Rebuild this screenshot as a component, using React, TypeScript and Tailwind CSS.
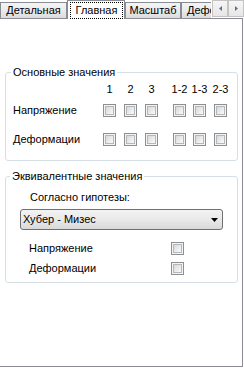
import React from "react";

function Check() {
  return (
    <div className="w-[13px] h-[13px] shrink-0 border border-[#8e8f8f] bg-[#f4f4f4] p-[1px]">
      <div className="w-full h-full border border-[#b4b8bd] bg-gradient-to-br from-[#d6d9dd] to-[#fafafa]" />
    </div>
  );
}

function Tab({ label, w }: { label: string; w: string }) {
  return (
    <div
      className={`${w} h-[16px] mb-[1px] shrink-0 border-t border-l border-r border-[#898c95] bg-gradient-to-b from-[#f4f4f4] via-[#ebebeb] to-[#dcdcdc] flex items-center justify-center whitespace-nowrap overflow-hidden`}
    >
      {label}
    </div>
  );
}

function Spin({ dir }: { dir: "l" | "r" }) {
  return (
    <div className="w-[16px] h-[17px] border border-[#c4c4c4] bg-gradient-to-b from-[#f6f6f6] to-[#e6e6e6] flex items-center justify-center">
      <svg width="3" height="5" viewBox="0 0 3 5">
        {dir === "l" ? (
          <polygon points="3,0 3,5 0,2.5" fill="#5a6f94" />
        ) : (
          <polygon points="0,0 0,5 3,2.5" fill="#5a6f94" />
        )}
      </svg>
    </div>
  );
}

const cols = ["1", "2", "3", "1-2", "1-3", "2-3"];
const colMargins = ["ml-0", "ml-[8px]", "ml-[8px]", "ml-[15px]", "ml-[7px]", "ml-[8px]"];

export default function App() {
  return (
    <div className="w-[244px] h-[368px] bg-white overflow-hidden relative text-[11px] leading-[13px] text-black font-['Liberation_Sans',Arial,sans-serif]">
      {/* tab strip */}
      <div className="relative z-10 h-[19px]">
        <div className="w-[211px] h-[19px] overflow-hidden flex items-end">
          <Tab label="Детальная" w="w-[67px]" />
          <div className="w-[58px] h-[19px] shrink-0 border-t border-l border-r border-[#898c95] bg-white">
            <div className="ml-[2px] mt-[1px] w-[53px] h-[17px] border border-dotted border-black flex items-center justify-center whitespace-nowrap">
              Главная
            </div>
          </div>
          <Tab label="Масштаб" w="w-[56px]" />
          <div className="w-[75px] h-[16px] mb-[1px] shrink-0 border-t border-l border-[#898c95] bg-gradient-to-b from-[#f4f4f4] via-[#ebebeb] to-[#dcdcdc] flex items-center pl-[5px] whitespace-nowrap">
            Деформации
          </div>
        </div>
        <div className="absolute top-0 left-[212px] flex">
          <Spin dir="l" />
          <Spin dir="r" />
        </div>
      </div>

      {/* page */}
      <div className="-mt-px -ml-px w-[244px] h-[349px] border border-[#898c95] bg-white">
        {/* group 1 */}
        <div className="relative ml-[5px] mt-[53px] w-[233px] h-[89px] border border-[#d5dfe5] rounded-[3px] pt-[10px]">
          <span className="absolute left-[5px] -top-[7px] bg-white px-[2px] whitespace-nowrap">
            Основные значения
          </span>
          <div className="flex pl-[7px] h-[13px]">
            <div className="w-[90px]" />
            {cols.map((c, i) => (
              <div key={c} className={`${colMargins[i]} w-[13px] flex justify-center whitespace-nowrap`}>
                {c}
              </div>
            ))}
          </div>
          <div className="flex items-center pl-[7px] mt-[8px] h-[13px]">
            <div className="w-[90px] whitespace-nowrap">Напряжение</div>
            {cols.map((c, i) => (
              <div key={c} className={colMargins[i]}>
                <Check />
              </div>
            ))}
          </div>
          <div className="flex items-center pl-[7px] mt-[16px] h-[13px]">
            <div className="w-[90px] whitespace-nowrap">Деформации</div>
            {cols.map((c, i) => (
              <div key={c} className={colMargins[i]}>
                <Check />
              </div>
            ))}
          </div>
        </div>

        {/* group 2 */}
        <div className="relative ml-[5px] mt-[15px] w-[233px] h-[107px] border border-[#d5dfe5] rounded-[3px] pt-[14px]">
          <span className="absolute left-[4px] -top-[7px] bg-white px-[2px] whitespace-nowrap">
            Эквивалентные значения
          </span>
          <div className="pl-[24px] h-[13px] whitespace-nowrap">Согласно гипотезы:</div>
          <div className="ml-[14px] mt-[5px] w-[203px] h-[21px] border border-[#707070] rounded-[3px] bg-gradient-to-b from-[#f3f3f3] via-[#e9e9e9] to-[#d9d9d9] flex items-center justify-between pl-[2px] pr-[4px]">
            <span className="whitespace-nowrap">Хубер - Мизес</span>
            <svg width="7" height="4" viewBox="0 0 7 4">
              <polygon points="0,0 7,0 3.5,4" fill="#000" />
            </svg>
          </div>
          <div className="flex items-center mt-[12px] h-[13px] pl-[23px]">
            <div className="w-[142px] whitespace-nowrap">Напряжение</div>
            <Check />
          </div>
          <div className="flex items-center mt-[7px] h-[13px] pl-[23px]">
            <div className="w-[142px] whitespace-nowrap">Деформации</div>
            <Check />
          </div>
        </div>
      </div>
    </div>
  );
}
